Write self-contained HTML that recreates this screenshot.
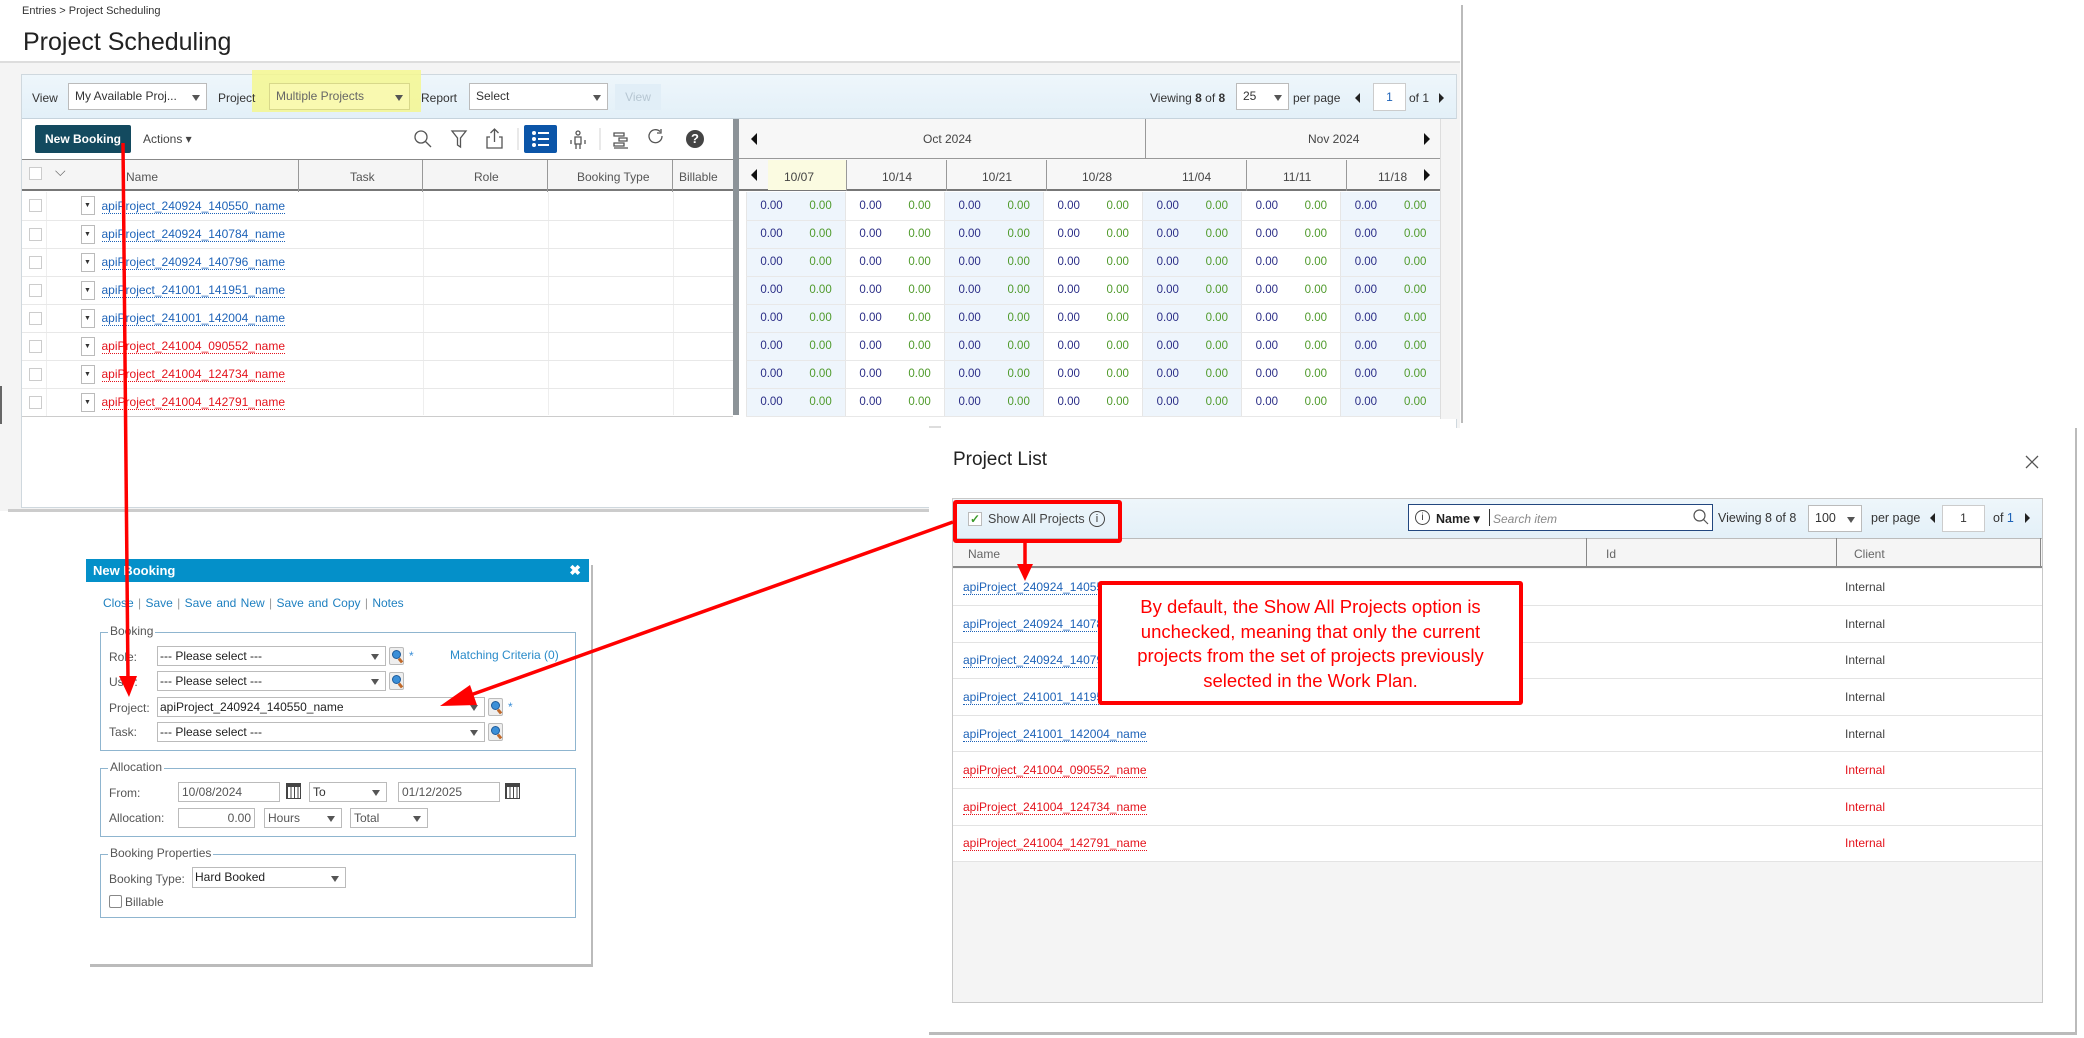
<!DOCTYPE html>
<html><head><meta charset="utf-8">
<style>
*{box-sizing:border-box;margin:0;padding:0}
body{width:2084px;height:1038px;position:relative;overflow:hidden;background:#fff;font-family:"Liberation Sans",sans-serif;font-size:12px;color:#333}
.a{position:absolute}
.sel{position:absolute;background:#fff;border:1px solid #bbb;font-size:12px;padding-left:6px;white-space:nowrap;overflow:hidden}
.sel:after{content:"";position:absolute;right:6px;top:50%;margin-top:-2px;border-left:4px solid transparent;border-right:4px solid transparent;border-top:6px solid #555}
.lnk{color:#1e63b8;border-bottom:1px dotted #1e63b8}
.red{color:#e4131c;border-bottom:1px dotted #e4131c}
table{border-collapse:collapse}
.tl td{width:49.57px;height:28px;text-align:center;font-size:11.5px;border-bottom:1px solid #e8e8e8;padding:0}
.tl td.b{color:#2a2d86}.tl td.g{color:#4f9a2b}
.tl tr td:nth-child(4n+1),.tl tr td:nth-child(4n+2){background:#eef5fc}
.tl tr td:nth-child(2n+1){border-left:1px solid #e6e6e6}
.fs{position:absolute;border:1px solid #8fb5cf}
.lg{position:absolute;top:-9px;left:7px;background:#fff;padding:0 2px;color:#555;font-size:12px}
.lb{position:absolute;color:#555;font-size:12px}
.inp{position:absolute;border:1px solid #bbb;background:#fff;font-size:12px;color:#555;padding-left:3px;line-height:18px}
.mag{position:absolute;width:15px;height:18px;border:1px solid #bbb;border-radius:2px;background:#eee}
.mag:before{content:"";position:absolute;left:2px;top:2px;width:7px;height:7px;border-radius:50%;background:#3b8fd8;border:1px solid #1e5b9a}
.mag:after{content:"";position:absolute;left:9px;top:10px;width:3px;height:5px;background:#c0692a;transform:rotate(-40deg)}
.cal{position:absolute;width:15px;height:16px;border:1px solid #444;background:repeating-linear-gradient(90deg,#444 0 1px,#fff 1px 3.5px),#fff;border-top:4px solid #444}
.pr td{height:36.6px;border-bottom:1px solid #e3e3e3;font-size:12px;padding:0}
</style></head><body>

<div class="a" style="left:22px;top:5px;font-size:11px;color:#333">Entries &gt; Project Scheduling</div>
<div class="a" style="left:23px;top:28px;font-size:25px;color:#222">Project Scheduling</div>
<div class="a" style="left:0;top:61px;width:1460px;height:450px;background:#f4f4f4;border-top:2px solid #ddd"></div>
<div class="a" style="left:1461px;top:5px;width:2px;height:418px;background:#bbb"></div>
<div class="a" style="left:8px;top:509px;width:1452px;height:3px;background:#ccc"></div>
<div class="a" style="left:0;top:386px;width:2px;height:38px;background:#666"></div>

<div class="a" style="left:21px;top:74px;width:1436px;height:434px;background:#fff;border:1px solid #cfd8de"></div>
<div class="a" style="left:22px;top:75px;width:1434px;height:44px;background:linear-gradient(#eef6fb,#e3f0f8);border-bottom:1px solid #c6d3dc"></div>
<div class="a" style="left:252px;top:70px;width:169px;height:42px;background:#f5f78f;opacity:.85"></div>
<div class="a" style="left:32px;top:91px;color:#333">View</div>
<div class="sel" style="left:68px;top:83px;width:139px;height:27px;line-height:25px">My Available Proj...</div>
<div class="a" style="left:218px;top:91px;color:#333">Project</div>
<div class="sel" style="left:269px;top:83px;width:141px;height:27px;line-height:25px;background:#f9f9b0;color:#666;border-color:#d8d88a">Multiple Projects</div>
<div class="a" style="left:421px;top:91px;color:#333">Report</div>
<div class="sel" style="left:469px;top:83px;width:139px;height:27px;line-height:25px">Select</div>
<div class="a" style="left:615px;top:84px;width:46px;height:26px;background:#e1eef7;color:#b6c6d2;text-align:center;line-height:26px">View</div>
<div class="a" style="left:1150px;top:91px">Viewing <b>8</b> of <b>8</b></div>
<div class="sel" style="left:1236px;top:83px;width:53px;height:27px;line-height:25px">25</div>
<div class="a" style="left:1293px;top:91px">per page</div>
<div class="a" style="left:1355px;top:93px;border-top:5px solid transparent;border-bottom:5px solid transparent;border-right:5px solid #222"></div>
<div class="a" style="left:1373px;top:83px;width:33px;height:28px;border:1px solid #ccc;background:#fff;text-align:center;line-height:26px;color:#1e63b8">1</div>
<div class="a" style="left:1409px;top:91px">of 1</div>
<div class="a" style="left:1439px;top:93px;border-top:5px solid transparent;border-bottom:5px solid transparent;border-left:5px solid #222"></div>

<div class="a" style="left:35px;top:125px;width:96px;height:28px;background:#134a5f;border-radius:2px;color:#fff;font-weight:bold;text-align:center;line-height:28px;font-size:12px">New Booking</div>
<div class="a" style="left:143px;top:132px;color:#444">Actions ▾</div>
<svg class="a" style="left:405px;top:122px" width="330" height="36" viewBox="405 122 330 36" fill="none" stroke="#555" stroke-width="1.3">
<circle cx="421" cy="137" r="6"/><line x1="425.5" y1="141.5" x2="431" y2="147"/>
<path d="M452 131h14l-5.5 7v9l-3-2v-7z"/>
<path d="M490 137h-3v11h15v-11h-3M494.5 142v-13M490.5 133l4-4 4 4"/>
<line x1="518" y1="128" x2="518" y2="150" stroke="#ddd"/>
<line x1="600" y1="128" x2="600" y2="150" stroke="#ddd"/>
<circle cx="578" cy="133" r="2"/><path d="M575 137h6v7h-6zM571 140v4M585 140v4M576 144v5M580 144v5"/>
<path d="M614 133h10v3h-10zM619 138h8v3h-8zM614 143h10v3h-10zM614 148h14"/>
<path d="M662 136a6.5 6.5 0 1 1-2-4.5M661 129v4h-4"/>
</svg>
<div class="a" style="left:524px;top:125px;width:33px;height:28px;background:#0b55a8;border-radius:2px"></div>
<svg class="a" style="left:524px;top:125px" width="33" height="28"><g fill="#fff"><circle cx="10" cy="8" r="2"/><circle cx="10" cy="14" r="2"/><circle cx="10" cy="20" r="2"/><rect x="14" y="7" width="11" height="2"/><rect x="14" y="13" width="11" height="2"/><rect x="14" y="19" width="11" height="2"/></g></svg>
<div class="a" style="left:686px;top:130px;width:18px;height:18px;border-radius:50%;background:#444;color:#fff;font-weight:bold;text-align:center;line-height:18px;font-size:13px">?</div>

<div class="a" style="left:733px;top:119px;width:6px;height:296px;background:#8c9398"></div>

<div class="a" style="left:22px;top:159px;width:711px;height:32px;background:#f5f5f5;border-top:1px solid #888;border-bottom:2px solid #777"></div>
<div class="a" style="left:29px;top:167px;width:13px;height:13px;border:1px solid #ccc;background:#fff"></div>
<div class="a" style="left:55px;top:163px;color:#666;font-size:14px">⌵</div>
<div class="a" style="left:126px;top:170px;color:#555">Name</div>
<div class="a" style="left:350px;top:170px;color:#555">Task</div>
<div class="a" style="left:474px;top:170px;color:#555">Role</div>
<div class="a" style="left:577px;top:170px;color:#555">Booking Type</div>
<div class="a" style="left:679px;top:170px;color:#555">Billable</div>
<div class="a" style="left:298px;top:160px;width:1px;height:255px;background:#999"></div>
<div class="a" style="left:422px;top:160px;width:1px;height:255px;background:#999"></div>
<div class="a" style="left:547px;top:160px;width:1px;height:255px;background:#999"></div>
<div class="a" style="left:672px;top:160px;width:1px;height:255px;background:#999"></div>
<div class="a" style="left:298px;top:192px;width:435px;height:223px;background:#fff"></div>
<div class="a" style="left:423px;top:192px;width:1px;height:223px;background:#eee"></div>
<div class="a" style="left:548px;top:192px;width:1px;height:223px;background:#eee"></div>
<div class="a" style="left:673px;top:192px;width:1px;height:223px;background:#eee"></div>

<div class="a" style="left:22px;top:192px;width:711px">
<table style="width:711px">
<tbody>
<tr style="height:28px"><td style="width:24px;border-bottom:1px solid #e8e8e8;border-right:1px solid #eee"><div style="width:13px;height:13px;border:1px solid #ccc;margin-left:7px"></div></td><td style="width:276px;border-bottom:1px solid #e8e8e8;padding-left:34px;position:relative"><span style="position:absolute;left:34px;top:4px;width:14px;height:19px;border:1px solid #bbb;font-size:7px;text-align:center;line-height:17px">▼</span><span class="lnk" style="margin-left:21px">apiProject_240924_140550_name</span></td><td style="border-bottom:1px solid #e8e8e8"></td></tr>
<tr style="height:28px"><td style="border-bottom:1px solid #e8e8e8;border-right:1px solid #eee"><div style="width:13px;height:13px;border:1px solid #ccc;margin-left:7px"></div></td><td style="border-bottom:1px solid #e8e8e8;padding-left:34px;position:relative"><span style="position:absolute;left:34px;top:4px;width:14px;height:19px;border:1px solid #bbb;font-size:7px;text-align:center;line-height:17px">▼</span><span class="lnk" style="margin-left:21px">apiProject_240924_140784_name</span></td><td style="border-bottom:1px solid #e8e8e8"></td></tr>
<tr style="height:28px"><td style="border-bottom:1px solid #e8e8e8;border-right:1px solid #eee"><div style="width:13px;height:13px;border:1px solid #ccc;margin-left:7px"></div></td><td style="border-bottom:1px solid #e8e8e8;padding-left:34px;position:relative"><span style="position:absolute;left:34px;top:4px;width:14px;height:19px;border:1px solid #bbb;font-size:7px;text-align:center;line-height:17px">▼</span><span class="lnk" style="margin-left:21px">apiProject_240924_140796_name</span></td><td style="border-bottom:1px solid #e8e8e8"></td></tr>
<tr style="height:28px"><td style="border-bottom:1px solid #e8e8e8;border-right:1px solid #eee"><div style="width:13px;height:13px;border:1px solid #ccc;margin-left:7px"></div></td><td style="border-bottom:1px solid #e8e8e8;padding-left:34px;position:relative"><span style="position:absolute;left:34px;top:4px;width:14px;height:19px;border:1px solid #bbb;font-size:7px;text-align:center;line-height:17px">▼</span><span class="lnk" style="margin-left:21px">apiProject_241001_141951_name</span></td><td style="border-bottom:1px solid #e8e8e8"></td></tr>
<tr style="height:28px"><td style="border-bottom:1px solid #e8e8e8;border-right:1px solid #eee"><div style="width:13px;height:13px;border:1px solid #ccc;margin-left:7px"></div></td><td style="border-bottom:1px solid #e8e8e8;padding-left:34px;position:relative"><span style="position:absolute;left:34px;top:4px;width:14px;height:19px;border:1px solid #bbb;font-size:7px;text-align:center;line-height:17px">▼</span><span class="lnk" style="margin-left:21px">apiProject_241001_142004_name</span></td><td style="border-bottom:1px solid #e8e8e8"></td></tr>
<tr style="height:28px"><td style="border-bottom:1px solid #e8e8e8;border-right:1px solid #eee"><div style="width:13px;height:13px;border:1px solid #ccc;margin-left:7px"></div></td><td style="border-bottom:1px solid #e8e8e8;padding-left:34px;position:relative"><span style="position:absolute;left:34px;top:4px;width:14px;height:19px;border:1px solid #bbb;font-size:7px;text-align:center;line-height:17px">▼</span><span class="red" style="margin-left:21px">apiProject_241004_090552_name</span></td><td style="border-bottom:1px solid #e8e8e8"></td></tr>
<tr style="height:28px"><td style="border-bottom:1px solid #e8e8e8;border-right:1px solid #eee"><div style="width:13px;height:13px;border:1px solid #ccc;margin-left:7px"></div></td><td style="border-bottom:1px solid #e8e8e8;padding-left:34px;position:relative"><span style="position:absolute;left:34px;top:4px;width:14px;height:19px;border:1px solid #bbb;font-size:7px;text-align:center;line-height:17px">▼</span><span class="red" style="margin-left:21px">apiProject_241004_124734_name</span></td><td style="border-bottom:1px solid #e8e8e8"></td></tr>
<tr style="height:28px"><td style="border-bottom:1px solid #ccc;border-right:1px solid #eee"><div style="width:13px;height:13px;border:1px solid #ccc;margin-left:7px"></div></td><td style="border-bottom:1px solid #ccc;padding-left:34px;position:relative"><span style="position:absolute;left:34px;top:4px;width:14px;height:19px;border:1px solid #bbb;font-size:7px;text-align:center;line-height:17px">▼</span><span class="red" style="margin-left:21px">apiProject_241004_142791_name</span></td><td style="border-bottom:1px solid #ccc"></td></tr>
</tbody></table></div>

<div class="a" style="left:739px;top:119px;width:701px;height:40px;background:#f7f7f7;border-bottom:1px solid #999"></div>
<div class="a" style="left:1145px;top:119px;width:1px;height:72px;background:#999"></div>
<div class="a" style="left:751px;top:133px;border-top:6px solid transparent;border-bottom:6px solid transparent;border-right:6px solid #111"></div>
<div class="a" style="left:923px;top:132px;color:#444">Oct 2024</div>
<div class="a" style="left:1308px;top:132px;color:#444">Nov 2024</div>
<div class="a" style="left:1424px;top:133px;border-top:6px solid transparent;border-bottom:6px solid transparent;border-left:6px solid #111"></div>
<div class="a" style="left:739px;top:159px;width:701px;height:32px;background:#f7f7f7;border-bottom:2px solid #777"></div>
<div class="a" style="left:768px;top:160px;width:78px;height:30px;background:#fbfbe1"></div>
<div class="a" style="left:751px;top:169px;border-top:6px solid transparent;border-bottom:6px solid transparent;border-right:6px solid #111"></div>
<div class="a" style="left:784px;top:170px;color:#444">10/07</div>
<div class="a" style="left:882px;top:170px;color:#444">10/14</div>
<div class="a" style="left:982px;top:170px;color:#444">10/21</div>
<div class="a" style="left:1082px;top:170px;color:#444">10/28</div>
<div class="a" style="left:1182px;top:170px;color:#444">11/04</div>
<div class="a" style="left:1283px;top:170px;color:#444">11/11</div>
<div class="a" style="left:1378px;top:170px;color:#444">11/18</div>
<div class="a" style="left:1424px;top:169px;border-top:6px solid transparent;border-bottom:6px solid transparent;border-left:6px solid #111"></div>
<div class="a" style="left:846px;top:160px;width:1px;height:31px;background:#999"></div>
<div class="a" style="left:946px;top:160px;width:1px;height:31px;background:#999"></div>
<div class="a" style="left:1046px;top:160px;width:1px;height:31px;background:#999"></div>
<div class="a" style="left:1246px;top:160px;width:1px;height:31px;background:#999"></div>
<div class="a" style="left:1346px;top:160px;width:1px;height:31px;background:#999"></div>
<div class="a" style="left:1440px;top:119px;width:17px;height:300px;background:#f4f4f4;border-left:1px solid #ddd"></div>

<div class="a" style="left:746px;top:192px;width:694px;overflow:hidden">
<table class="tl" style="width:694px">
<tr><td class="b">0.00</td><td class="g">0.00</td><td class="b">0.00</td><td class="g">0.00</td><td class="b">0.00</td><td class="g">0.00</td><td class="b">0.00</td><td class="g">0.00</td><td class="b">0.00</td><td class="g">0.00</td><td class="b">0.00</td><td class="g">0.00</td><td class="b">0.00</td><td class="g">0.00</td></tr>
<tr><td class="b">0.00</td><td class="g">0.00</td><td class="b">0.00</td><td class="g">0.00</td><td class="b">0.00</td><td class="g">0.00</td><td class="b">0.00</td><td class="g">0.00</td><td class="b">0.00</td><td class="g">0.00</td><td class="b">0.00</td><td class="g">0.00</td><td class="b">0.00</td><td class="g">0.00</td></tr>
<tr><td class="b">0.00</td><td class="g">0.00</td><td class="b">0.00</td><td class="g">0.00</td><td class="b">0.00</td><td class="g">0.00</td><td class="b">0.00</td><td class="g">0.00</td><td class="b">0.00</td><td class="g">0.00</td><td class="b">0.00</td><td class="g">0.00</td><td class="b">0.00</td><td class="g">0.00</td></tr>
<tr><td class="b">0.00</td><td class="g">0.00</td><td class="b">0.00</td><td class="g">0.00</td><td class="b">0.00</td><td class="g">0.00</td><td class="b">0.00</td><td class="g">0.00</td><td class="b">0.00</td><td class="g">0.00</td><td class="b">0.00</td><td class="g">0.00</td><td class="b">0.00</td><td class="g">0.00</td></tr>
<tr><td class="b">0.00</td><td class="g">0.00</td><td class="b">0.00</td><td class="g">0.00</td><td class="b">0.00</td><td class="g">0.00</td><td class="b">0.00</td><td class="g">0.00</td><td class="b">0.00</td><td class="g">0.00</td><td class="b">0.00</td><td class="g">0.00</td><td class="b">0.00</td><td class="g">0.00</td></tr>
<tr><td class="b">0.00</td><td class="g">0.00</td><td class="b">0.00</td><td class="g">0.00</td><td class="b">0.00</td><td class="g">0.00</td><td class="b">0.00</td><td class="g">0.00</td><td class="b">0.00</td><td class="g">0.00</td><td class="b">0.00</td><td class="g">0.00</td><td class="b">0.00</td><td class="g">0.00</td></tr>
<tr><td class="b">0.00</td><td class="g">0.00</td><td class="b">0.00</td><td class="g">0.00</td><td class="b">0.00</td><td class="g">0.00</td><td class="b">0.00</td><td class="g">0.00</td><td class="b">0.00</td><td class="g">0.00</td><td class="b">0.00</td><td class="g">0.00</td><td class="b">0.00</td><td class="g">0.00</td></tr>
<tr><td class="b">0.00</td><td class="g">0.00</td><td class="b">0.00</td><td class="g">0.00</td><td class="b">0.00</td><td class="g">0.00</td><td class="b">0.00</td><td class="g">0.00</td><td class="b">0.00</td><td class="g">0.00</td><td class="b">0.00</td><td class="g">0.00</td><td class="b">0.00</td><td class="g">0.00</td></tr>
</table></div>

<div class="a" style="left:90px;top:565px;width:503px;height:402px;background:#fff;border-right:2px solid #bbb;border-bottom:3px solid #bbb"></div>
<div class="a" style="left:86px;top:559px;width:503px;height:23px;background:#0490c9;color:#fff;font-weight:bold;font-size:13px;line-height:23px;padding-left:7px">New Booking<span style="position:absolute;right:8px;font-size:14px">✖</span></div>
<div class="a" style="left:103px;top:596px;color:#1f80c0;font-size:12px;word-spacing:1px">Close <span style="color:#999">|</span> Save <span style="color:#999">|</span> Save and New <span style="color:#999">|</span> Save and Copy <span style="color:#999">|</span> Notes</div>

<div class="fs" style="left:100px;top:632px;width:476px;height:119px"><span class="lg">Booking</span></div>
<div class="lb" style="left:109px;top:650px">Role:</div>
<div class="sel" style="left:157px;top:646px;width:229px;height:20px;line-height:18px;padding-left:2px;color:#222">--- Please select ---</div>
<div class="mag" style="left:389px;top:647px"></div><div class="a" style="left:409px;top:649px;color:#3b8fd8">*</div>
<div class="a" style="left:450px;top:648px;color:#2a8bc9">Matching Criteria (0)</div>
<div class="lb" style="left:109px;top:675px">User:</div>
<div class="sel" style="left:157px;top:671px;width:229px;height:20px;line-height:18px;padding-left:2px;color:#222">--- Please select ---</div>
<div class="mag" style="left:389px;top:672px"></div>
<div class="lb" style="left:109px;top:701px">Project:</div>
<div class="sel" style="left:157px;top:697px;width:328px;height:20px;line-height:18px;padding-left:2px;color:#222">apiProject_240924_140550_name</div>
<div class="mag" style="left:488px;top:698px"></div><div class="a" style="left:508px;top:700px;color:#3b8fd8">*</div>
<div class="lb" style="left:109px;top:725px">Task:</div>
<div class="sel" style="left:157px;top:722px;width:328px;height:20px;line-height:18px;padding-left:2px;color:#222">--- Please select ---</div>
<div class="mag" style="left:488px;top:723px"></div>

<div class="fs" style="left:100px;top:768px;width:476px;height:69px"><span class="lg">Allocation</span></div>
<div class="lb" style="left:109px;top:786px">From:</div>
<div class="inp" style="left:178px;top:782px;width:102px;height:20px">10/08/2024</div>
<div class="cal" style="left:286px;top:783px"></div>
<div class="sel" style="left:309px;top:782px;width:78px;height:20px;line-height:18px;padding-left:3px">To</div>
<div class="inp" style="left:398px;top:782px;width:102px;height:20px">01/12/2025</div>
<div class="cal" style="left:505px;top:783px"></div>
<div class="lb" style="left:109px;top:811px">Allocation:</div>
<div class="inp" style="left:178px;top:808px;width:77px;height:20px;text-align:right;padding-right:3px">0.00</div>
<div class="sel" style="left:264px;top:808px;width:78px;height:20px;line-height:18px;padding-left:3px;color:#555">Hours</div>
<div class="sel" style="left:350px;top:808px;width:78px;height:20px;line-height:18px;padding-left:3px;color:#555">Total</div>

<div class="fs" style="left:100px;top:854px;width:476px;height:64px"><span class="lg">Booking Properties</span></div>
<div class="lb" style="left:109px;top:872px">Booking Type:</div>
<div class="sel" style="left:192px;top:867px;width:154px;height:21px;line-height:19px;padding-left:2px;color:#222">Hard Booked</div>
<div class="a" style="left:109px;top:895px;width:13px;height:13px;border:1px solid #888;border-radius:2px"></div>
<div class="lb" style="left:125px;top:895px">Billable</div>

<div class="a" style="left:929px;top:428px;width:1148px;height:607px;background:#fff;border-right:2px solid #bbb;border-bottom:3px solid #bbb"></div>
<div class="a" style="left:929px;top:426px;width:12px;height:2px;background:#ddd"></div>
<div class="a" style="left:953px;top:449px;font-size:19px;color:#222">Project List</div>
<svg class="a" style="left:2025px;top:455px" width="14" height="14"><path d="M1 1L13 13M13 1L1 13" stroke="#555" stroke-width="1.3"/></svg>
<div class="a" style="left:952px;top:498px;width:1091px;height:505px;background:#f4f4f4;border:1px solid #c8c8c8"></div>
<div class="a" style="left:953px;top:499px;width:1089px;height:39px;background:linear-gradient(#eef6fb,#e3f0f8)"></div>
<div class="a" style="left:968px;top:512px;width:14px;height:14px;border:1px solid #bbb;background:#fff;color:#3a9a2a;font-size:12px;line-height:12px;text-align:center;font-weight:bold">✓</div>
<div class="a" style="left:988px;top:512px;color:#444;font-size:12.5px">Show All Projects</div>
<div class="a" style="left:1089px;top:511px;width:16px;height:16px;border:1.3px solid #444;border-radius:50%;text-align:center;font-size:11px;line-height:14px;color:#333">i</div>
<div class="a" style="left:1408px;top:504px;width:305px;height:27px;border:1px solid #22477f;background:#fff"></div>
<div class="a" style="left:1415px;top:510px;width:15px;height:15px;border:1.2px solid #444;border-radius:50%;text-align:center;font-size:10px;line-height:13px">i</div>
<div class="a" style="left:1436px;top:511px;font-weight:bold;font-size:12.5px;color:#222">Name ▾</div>
<div class="a" style="left:1489px;top:509px;width:1px;height:17px;background:#333"></div>
<div class="a" style="left:1493px;top:512px;font-style:italic;color:#888;font-size:12px">Search item</div>
<svg class="a" style="left:1692px;top:508px" width="18" height="18" fill="none" stroke="#555" stroke-width="1.2"><circle cx="7.5" cy="7.5" r="5.5"/><line x1="11.5" y1="11.5" x2="16" y2="16"/></svg>
<div class="a" style="left:1718px;top:511px;color:#333;font-size:12.5px">Viewing 8 of 8</div>
<div class="sel" style="left:1808px;top:505px;width:54px;height:27px;line-height:25px;font-size:12.5px">100</div>
<div class="a" style="left:1871px;top:511px;color:#333;font-size:12.5px">per page</div>
<div class="a" style="left:1930px;top:513px;border-top:5px solid transparent;border-bottom:5px solid transparent;border-right:5px solid #222"></div>
<div class="a" style="left:1942px;top:505px;width:43px;height:27px;border:1px solid #ccc;background:#fff;text-align:center;line-height:25px">1</div>
<div class="a" style="left:1993px;top:511px;color:#333;font-size:12.5px">of <span style="color:#1e63b8">1</span></div>
<div class="a" style="left:2025px;top:513px;border-top:5px solid transparent;border-bottom:5px solid transparent;border-left:5px solid #222"></div>
<div class="a" style="left:953px;top:538px;width:1089px;height:30px;background:#f5f5f5;border-top:1px solid #bbb;border-bottom:2px solid #888"></div>
<div class="a" style="left:1586px;top:538px;width:1px;height:30px;background:#888"></div>
<div class="a" style="left:1836px;top:538px;width:1px;height:30px;background:#888"></div>
<div class="a" style="left:2040px;top:538px;width:1px;height:30px;background:#888"></div>
<div class="a" style="left:968px;top:547px;color:#666">Name</div>
<div class="a" style="left:1606px;top:547px;color:#666">Id</div>
<div class="a" style="left:1854px;top:547px;color:#666">Client</div>
<div class="a" style="left:953px;top:569px;width:1089px;background:#fff">
<table class="pr" style="width:1089px">
<tr><td style="padding-left:10px"><span class="lnk">apiProject_240924_140550_name</span></td><td style="width:197px;color:#444">Internal</td></tr>
<tr><td style="padding-left:10px"><span class="lnk">apiProject_240924_140784_name</span></td><td style="color:#444">Internal</td></tr>
<tr><td style="padding-left:10px"><span class="lnk">apiProject_240924_140796_name</span></td><td style="color:#444">Internal</td></tr>
<tr><td style="padding-left:10px"><span class="lnk">apiProject_241001_141951_name</span></td><td style="color:#444">Internal</td></tr>
<tr><td style="padding-left:10px"><span class="lnk">apiProject_241001_142004_name</span></td><td style="color:#444">Internal</td></tr>
<tr><td style="padding-left:10px"><span class="red">apiProject_241004_090552_name</span></td><td style="color:#e4131c">Internal</td></tr>
<tr><td style="padding-left:10px"><span class="red">apiProject_241004_124734_name</span></td><td style="color:#e4131c">Internal</td></tr>
<tr><td style="padding-left:10px"><span class="red">apiProject_241004_142791_name</span></td><td style="color:#e4131c">Internal</td></tr>
</table></div>

<div class="a" style="left:953px;top:500px;width:169px;height:43px;border:4px solid #f00;border-radius:3px"></div>
<div class="a" style="left:1098px;top:581px;width:425px;height:124px;background:#fff;border:4px solid #f00;border-radius:3px;color:#f00;font-size:18.5px;line-height:24.5px;text-align:center;padding-top:10px">By default, the Show All Projects option is<br>unchecked, meaning that only the current<br>projects from the set of projects previously<br>selected in the Work Plan.</div>
<svg class="a" style="left:0;top:0" width="2084" height="1038">
<g stroke="#f00" stroke-width="3.5" fill="#f00">
<line x1="123" y1="143" x2="128" y2="680"/>
<polygon points="119,676 137,676 129,697" stroke="none"/>
<line x1="1025" y1="543" x2="1025" y2="566"/>
<polygon points="1017,564 1033,564 1025,581" stroke="none"/>
<line x1="953" y1="522" x2="465" y2="697"/>
<polygon points="440,706 470,685 477,705" stroke="none"/>
</g></svg>
</body></html>
